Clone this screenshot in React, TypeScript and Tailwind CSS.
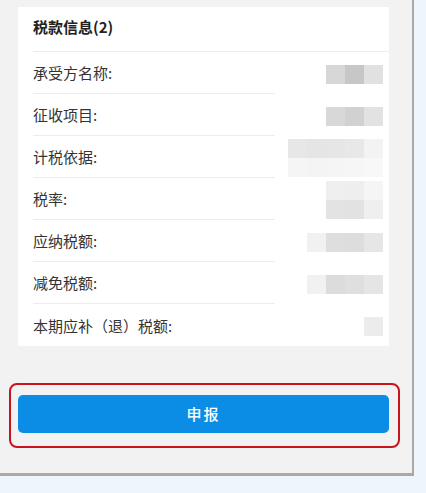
import React from 'react';

type Row = {
  label: string;
  // 打码的灰块：每行一组颜色，从右往左排
  blocks: string[][];
};

const rows: Row[] = [
  { label: '承受方名称:', blocks: [['#d7d7d7', '#c7c7c7', '#e1e1e1']] },
  { label: '征收项目:', blocks: [['#d8d8d8', '#d1d1d1', '#e2e2e2']] },
  {
    label: '计税依据:',
    blocks: [
      ['#e7e7e7', '#e5e5e5', '#e6e6e6', '#e8e8e8', '#f3f3f3'],
      ['#f5f5f5', '#f4f4f4', '#f5f5f5', '#f6f6f6', '#f8f8f8'],
    ],
  },
  {
    label: '税率:',
    blocks: [
      ['#efefef', '#eeeeee', '#f5f5f5'],
      ['#e3e3e3', '#e2e2e2', '#efefef'],
    ],
  },
  { label: '应纳税额:', blocks: [['#f1f1f1', '#dedede', '#dddddd', '#e6e6e6']] },
  { label: '减免税额:', blocks: [['#f1f1f1', '#dcdcdc', '#dfdfdf', '#e5e5e5']] },
  { label: '本期应补（退）税额:', blocks: [['#ececec']] },
];

function Mosaic({ lines }: { lines: string[][] }) {
  return (
    <div className="flex flex-col items-end">
      {lines.map((line, i) => (
        <div key={i} className="flex">
          {line.map((c, j) => (
            <div key={j} className="w-[19px] h-[19px]" style={{ backgroundColor: c }} />
          ))}
        </div>
      ))}
    </div>
  );
}

export default function App() {
  return (
    <div
      className="w-[426px] h-[493px] bg-[#eef5fb] text-[#333333]"
      style={{ fontFamily: '"Noto Sans CJK SC", "Liberation Sans", sans-serif' }}
    >
      <div className="w-[414px] h-[476px] bg-[#f2f2f2] border-r-2 border-b-[3px] border-[#a9a9a9] pt-[7px]">
        {/* 税款信息卡片 */}
        <div className="ml-[18px] w-[371px] bg-white">
          <div className="ml-[15px] h-[45px] border-b border-[#ececec] flex items-center pb-[4px]">
            <span className="text-[15px] font-bold text-[#222]">税款信息(2)</span>
          </div>
          <div className="pl-[15px]">
            {rows.map((r, i) => (
              <div key={r.label} className="flex h-[42px]">
                <div
                  className={
                    'flex-1 flex items-center pt-[2px] text-[15px] ' +
                    (i < rows.length - 1 ? 'border-b border-[#ececec]' : '')
                  }
                >
                  {r.label}
                </div>
                <div className="w-[114px] flex items-center justify-end pr-[6px] pt-[2px]">
                  <Mosaic lines={r.blocks} />
                </div>
              </div>
            ))}
          </div>
        </div>

        {/* 申报按钮 */}
        <div className="mt-[37px] ml-[9px] w-[391px] h-[65px] border-2 border-[#c8141c] rounded-[8px] pl-[7px] pt-[10px]">
          <button className="w-[371px] h-[38px] rounded-[5px] bg-[#0b8de6] text-white text-[15px] font-medium tracking-[2px]">
            申报
          </button>
        </div>
      </div>
    </div>
  );
}
